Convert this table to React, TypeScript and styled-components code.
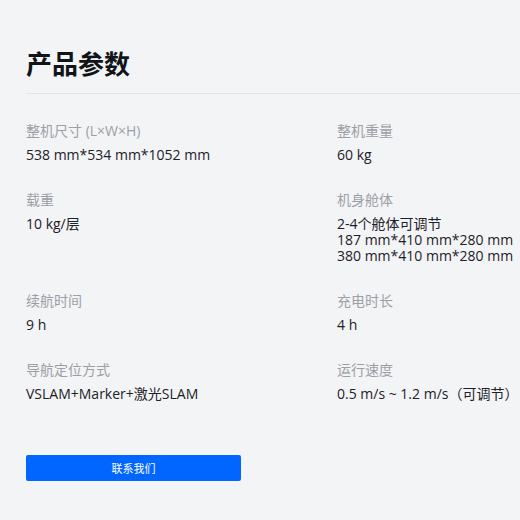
import React from "react";
import styled, { createGlobalStyle } from "styled-components";

const Global = createGlobalStyle`
  html, body { margin: 0; padding: 0; background: #f3f4f6; }
  body { font-family: "Open Sans", "Noto Sans CJK SC", sans-serif; overflow: hidden; }
`;

const Page = styled.div`
  width: 520px;
  height: 520px;
  overflow: hidden;
  background: #f3f4f6;
  padding: 44px 0 0 26px;
  box-sizing: border-box;
`;

const Title = styled.h2`
  margin: 0;
  font-family: "Noto Sans", "Noto Sans CJK SC", sans-serif;
  font-size: 26px;
  line-height: 40px;
  font-weight: 700;
  color: #111418;
  padding-bottom: 9px;
  border-bottom: 1px solid #e2e4e8;
  width: 700px;
`;

const Grid = styled.div`
  display: grid;
  grid-template-columns: 311px 311px;
  row-gap: 27px;
  margin-top: 27px;
`;

const Item = styled.div`
  display: flex;
  flex-direction: column;
`;

const Label = styled.div`
  font-size: 14px;
  line-height: 20px;
  color: #9ca0a6;
  margin-bottom: 6px;
`;

const Value = styled.div`
  font-size: 14px;
  line-height: 16px;
  color: #1d2129;
  white-space: nowrap;
`;

const Button = styled.button`
  margin-top: 53px;
  width: 215px;
  height: 26px;
  border: none;
  border-radius: 2px;
  background: #0066ff;
  color: #ffffff;
  font-family: "Noto Sans", "Noto Sans CJK SC", sans-serif;
  font-size: 11px;
  padding: 0;
  display: block;
  cursor: pointer;
`;

const specs: { label: string; value: string[] }[] = [
  { label: "整机尺寸 (L×W×H)", value: ["538 mm*534 mm*1052 mm"] },
  { label: "整机重量", value: ["60 kg"] },
  { label: "载重", value: ["10 kg/层"] },
  {
    label: "机身舱体",
    value: ["2-4个舱体可调节", "187 mm*410 mm*280 mm", "380 mm*410 mm*280 mm"],
  },
  { label: "续航时间", value: ["9 h"] },
  { label: "充电时长", value: ["4 h"] },
  { label: "导航定位方式", value: ["VSLAM+Marker+激光SLAM"] },
  { label: "运行速度", value: ["0.5 m/s ~ 1.2 m/s（可调节）"] },
];

export default function App() {
  return (
    <>
      <Global />
      <Page>
        <Title>产品参数</Title>
        <Grid>
          {specs.map((s) => (
            <Item key={s.label}>
              <Label>{s.label}</Label>
              {s.value.map((v) => (
                <Value key={v}>{v}</Value>
              ))}
            </Item>
          ))}
        </Grid>
        <Button>联系我们</Button>
      </Page>
    </>
  );
}
